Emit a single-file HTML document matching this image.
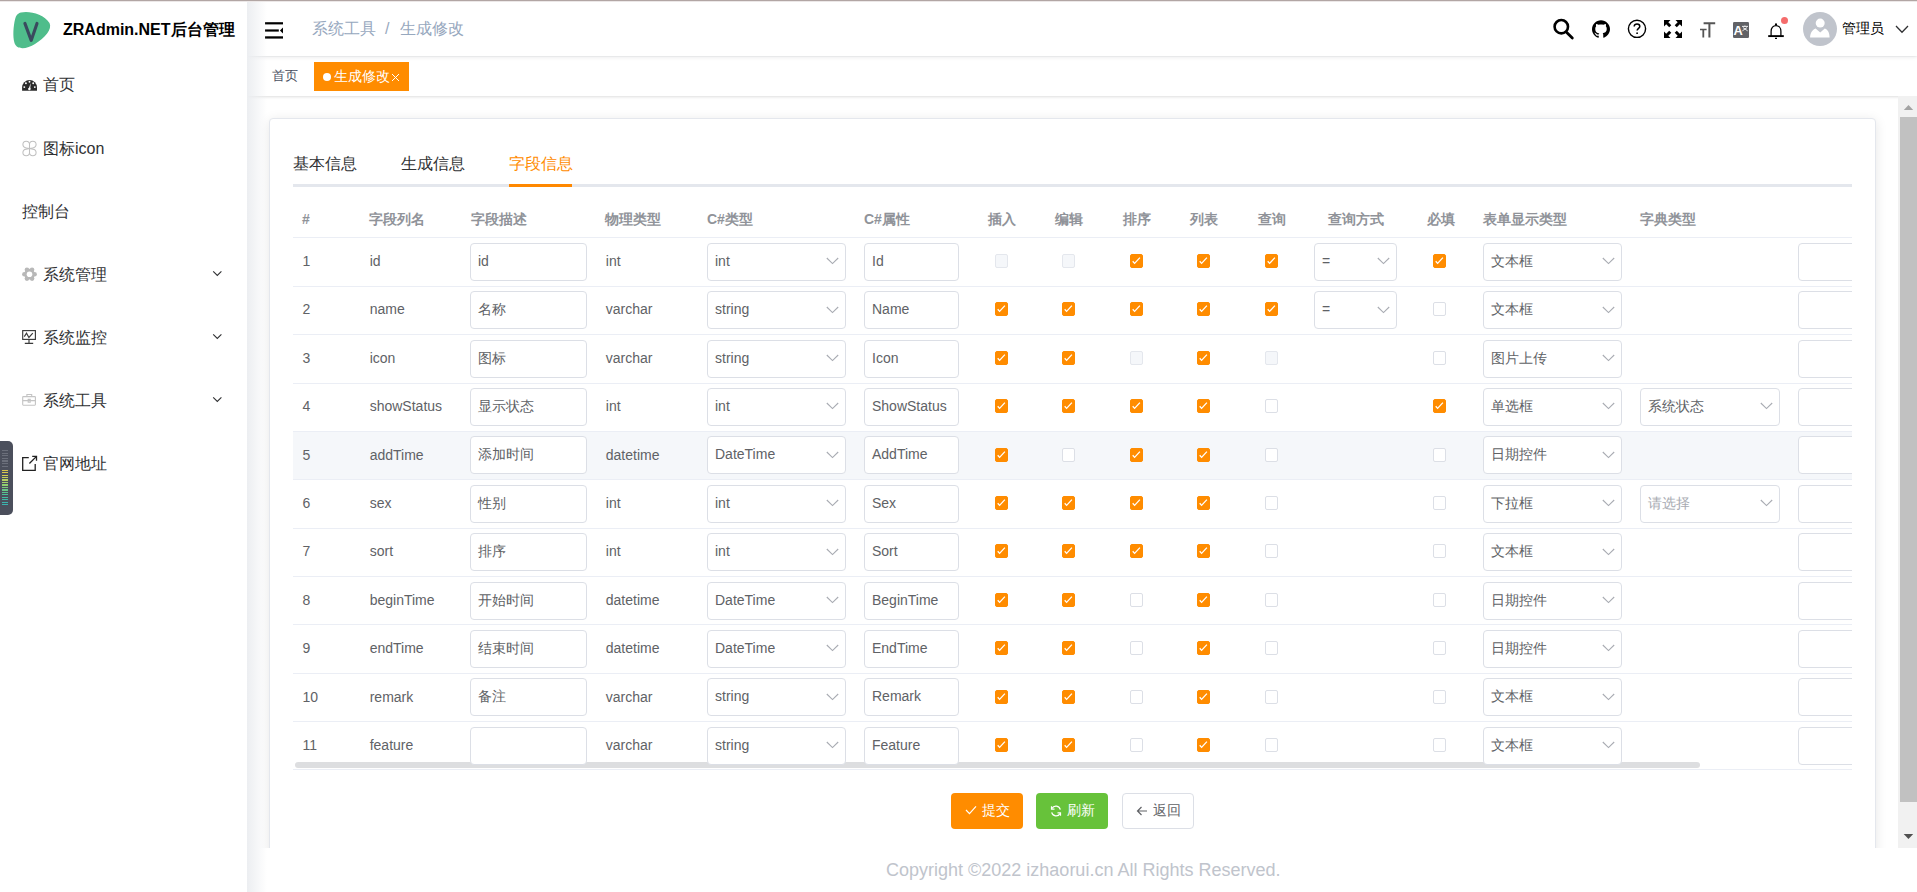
<!DOCTYPE html>
<html><head><meta charset="utf-8">
<style>
*{box-sizing:border-box;margin:0;padding:0}
html,body{width:1917px;height:892px;overflow:hidden;background:#fff;font-family:"Liberation Sans",sans-serif;color:#303133}
.abs{position:absolute}
#topline{position:absolute;left:0;top:0;width:1917px;height:2px;background:linear-gradient(#b2a6a4 0,#b2a6a4 50%,#ece8e8 50%,#ece8e8 100%);z-index:10}
/* sidebar */
#side{position:absolute;left:0;top:0;width:247px;height:892px;background:#fff;z-index:3}
#sideshadow{position:absolute;left:247px;top:1px;width:20px;height:891px;background:linear-gradient(to right,#eceef1,rgba(255,255,255,0));z-index:2}
.logo{position:absolute;left:14px;top:12px;width:37px;height:37px}
.title{position:absolute;left:63px;top:19.6px;font-size:16px;font-weight:bold;color:#000;white-space:nowrap;line-height:20px}
.mi{position:absolute;left:22px;font-size:16px;color:#303133;white-space:nowrap;line-height:20px}
.mi .t{position:absolute;left:21px;top:0}
.mi svg{position:absolute;left:0;top:3px}
.chev{position:absolute;left:212px;width:11px;height:7px}
#widget{position:absolute;left:0;top:441px;width:13px;height:74px;background:#4b4f5c;border-radius:0 5px 5px 0;z-index:4}
/* header */
#header{position:absolute;left:247px;top:1px;width:1670px;height:55px;background:#fff;box-shadow:0 1px 4px rgba(0,21,41,.1);z-index:1}
#tags{position:absolute;left:247px;top:57px;width:1670px;height:39px;background:#fff;box-shadow:0 1px 3px 0 rgba(0,0,0,.12),0 0 3px 0 rgba(0,0,0,.04)}
.bc{position:absolute;top:18px;font-size:16px;color:#97a8be;line-height:20px;white-space:nowrap}
.tag1{position:absolute;left:272px;top:66px;font-size:13px;color:#495060;line-height:20px}
.tag2{position:absolute;left:314px;top:62px;width:95px;height:29px;background:#ff8c00;color:#fff;font-size:13px;line-height:29px;white-space:nowrap}
/* main */
#card{position:absolute;left:269px;top:118px;width:1607px;height:800px;background:#fff;border:1px solid #e4e7ed;border-radius:4px;box-shadow:0 2px 12px 0 rgba(0,0,0,.1)}
#mainclip{position:absolute;left:247px;top:96px;width:1651px;height:752px;overflow:hidden}
.tab{position:absolute;top:154px;font-size:16px;color:#303133;line-height:20px;white-space:nowrap}
#tabline{position:absolute;left:293px;top:184px;width:1559px;height:3px;background:#e4e7ed}
#tabbar{position:absolute;left:509px;top:184px;width:63px;height:3px;background:#ff8800}
#tbl{position:absolute;left:293px;top:0;width:1559px;height:892px;overflow:hidden}
.th{position:absolute;top:210px;font-size:14px;font-weight:bold;color:#909399;line-height:18px;white-space:nowrap}
.hl{position:absolute;left:0;width:1559px;height:1px;background:#ebeef5}
.rowbg{position:absolute;left:0;width:1559px;background:#fff}
.rowbg.hov{background:#f5f7fa}
.td{position:absolute;font-size:14px;color:#606266;line-height:18px;white-space:nowrap}
.inp{position:absolute;height:38px;border:1px solid #dcdfe6;border-radius:4px;background:#fff;font-size:14px;color:#606266;line-height:35px;padding-left:7px;white-space:nowrap;overflow:hidden}
.inp .ph{color:#a8abb2}
.inp .arr{position:absolute;right:6px;top:13.4px}
.cb{position:absolute;width:13px;height:14px;border:1px solid #dcdfe6;border-radius:2px;background:#fff}
.cb.dis{background:#f5f7fa;border-color:#e4e7ed}
.cb.on{background:#ff8c00;border-color:#ff8c00}
.cb svg{position:absolute;left:-1px;top:-1px}
#hscroll{position:absolute;left:2px;top:762px;width:1405px;height:6px;background:#dddee0;border-radius:3px}
.btn{position:absolute;top:793px;height:36px;width:72px;border-radius:4px;font-size:14px;line-height:34px;color:#fff;white-space:nowrap}
/* scrollbar */
#vs{position:absolute;left:1898px;top:96px;width:19px;height:752px;background:#f1f1f1}
#vthumb{position:absolute;left:2px;top:21px;width:17px;height:685px;background:#c1c1c1}
#footer{position:absolute;left:886px;top:859px;font-size:18px;color:#c0c4cc;line-height:22px;white-space:nowrap}
.hi{position:absolute}
</style></head><body>
<div id="topline"></div>

<div id="header">
  <svg class="abs" style="left:18px;top:21px" width="20" height="18" viewBox="0 0 20 18"><rect x="0" y="0.2" width="18" height="2.2" fill="#000"/><rect x="0" y="7.4" width="13.8" height="2.2" fill="#000"/><rect x="0" y="14.3" width="18" height="2.3" fill="#000"/><path d="M18 5.6 L14.9 8.5 L18 11.4 Z" fill="#000"/></svg>
  <div class="bc" style="left:65px">系统工具</div>
  <div class="bc" style="left:138px">/</div>
  <div class="bc" style="left:153px">生成修改</div>
</div>
<div class="abs" style="left:0;top:0;z-index:2">
<svg class="abs" style="left:1550px;top:16px" width="26" height="26" viewBox="0 0 26 26"><circle cx="11.3" cy="10.7" r="6.7" stroke="#000" stroke-width="2.6" fill="none"/><path d="M16.5 16.3 L22.3 22" stroke="#000" stroke-width="2.8" stroke-linecap="round"/></svg>
<svg class="abs" style="left:1592px;top:20px" width="18" height="18" viewBox="0 0 16 16"><path fill="#000" d="M8 0.2C3.6 0.2 0 3.8 0 8.2c0 3.5 2.3 6.5 5.5 7.6.4.1.5-.2.5-.4v-1.4c-2.2.5-2.7-1-2.7-1-.4-.9-.9-1.2-.9-1.2-.7-.5.1-.5.1-.5.8.1 1.2.8 1.2.8.7 1.2 1.9.9 2.3.7.1-.5.3-.9.5-1.1-1.8-.2-3.6-.9-3.6-4 0-.9.3-1.6.8-2.1-.1-.2-.4-1 .1-2.1 0 0 .7-.2 2.2.8.6-.2 1.3-.3 2-.3s1.4.1 2 .3c1.5-1 2.2-.8 2.2-.8.4 1.1.2 1.9.1 2.1.5.6.8 1.3.8 2.1 0 3.1-1.9 3.7-3.6 3.9.3.3.5.8.5 1.5v2.2c0 .2.1.5.6.4 3.2-1.1 5.4-4.1 5.4-7.6C16 3.8 12.4.2 8 .2z"/></svg>
<svg class="abs" style="left:1626px;top:18px" width="22" height="22" viewBox="0 0 22 22"><circle cx="11" cy="10.8" r="8.6" stroke="#000" stroke-width="1.4" fill="none"/><path d="M8.2 8.6 C8.2 6.9 9.4 6 11 6 C12.6 6 13.8 7 13.8 8.4 C13.8 10.2 11.1 10.5 11.1 12.6" stroke="#000" stroke-width="1.5" fill="none"/><circle cx="11.1" cy="15.2" r="0.9" fill="#000"/></svg>
<svg class="abs" style="left:1663px;top:19px" width="20" height="20" viewBox="0 0 20 20" fill="#000"><path d="M1 1 H7.5 L5.3 3.2 L8.3 6.2 L6.2 8.3 L3.2 5.3 L1 7.5 Z"/><path d="M19 1 V7.5 L16.8 5.3 L13.8 8.3 L11.7 6.2 L14.7 3.2 L12.5 1 Z"/><path d="M1 19 V12.5 L3.2 14.7 L6.2 11.7 L8.3 13.8 L5.3 16.8 L7.5 19 Z"/><path d="M19 19 H12.5 L14.7 16.8 L11.7 13.8 L13.8 11.7 L16.8 14.7 L19 12.5 Z"/></svg>
<svg class="abs" style="left:1699px;top:21px" width="18" height="18" viewBox="0 0 18 18" fill="#555"><path d="M4.6 1.3 H16.2 V3.2 H11.4 V16.6 H9.4 V3.2 H4.6 Z"/><path d="M1 7.7 H7.6 V9.3 H5.2 V16.6 H3.4 V9.3 H1 Z"/></svg>
<svg class="abs" style="left:1732px;top:21px" width="18" height="18" viewBox="0 0 18 18"><rect x="1" y="1" width="16" height="16" rx="1.2" fill="#616266"/><text x="1.5" y="14.1" font-family="Liberation Sans" font-weight="bold" font-size="12.8" fill="#fff">A</text><path d="M10 5.4 H16 M12.9 4.5 V5.4 M11 6.6 L15.6 9.8 M15 6.6 L10.4 9.8" stroke="#fff" stroke-width="0.9" fill="none"/></svg>
<svg class="abs" style="left:1766px;top:21px" width="20" height="20" viewBox="0 0 20 20"><path d="M5.1 15 V10.2 C5.1 6.9 7.2 4.5 10 4.5 C12.8 4.5 14.9 6.9 14.9 10.2 V15" stroke="#000" stroke-width="1.25" fill="none"/><path d="M2.2 15.1 H17.8" stroke="#000" stroke-width="1.9"/><circle cx="10" cy="3.4" r="1.1" fill="#000"/><path d="M9 17.4 H11" stroke="#000" stroke-width="1.2"/></svg>
<div class="abs" style="left:1781px;top:16.5px;width:7px;height:7px;border-radius:50%;background:#f56c6c"></div>
<svg class="abs" style="left:1803px;top:12px" width="34" height="34" viewBox="0 0 34 34"><circle cx="17" cy="17" r="17" fill="#c0c4cc"/><circle cx="17.2" cy="11.1" r="4.5" fill="#fff"/><path d="M7.1 25.6 C7.1 21.4 9.4 17.6 12.6 16.6 L17.2 20.6 L21.8 16.6 C25 17.6 26.6 21.4 26.6 25.6 Z" fill="#fff"/></svg>
<div class="abs" style="left:1842px;top:19px;font-size:14px;line-height:18px;color:#000;white-space:nowrap">管理员</div>
<svg class="abs" style="left:1895px;top:25px" width="14" height="9" viewBox="0 0 14 9"><path d="M1 1 L7 7.2 L13 1" stroke="#303133" stroke-width="1.3" fill="none"/></svg>
</div>

<div id="tags"></div>
<div class="tag1">首页</div>
<div class="tag2"><span class="abs" style="left:9px;top:10.5px;width:8px;height:8px;border-radius:4px;background:#fff"></span><span class="abs" style="left:20px;top:0;font-size:13.5px">生成修改</span><svg class="abs" style="left:77px;top:11px" width="9" height="9" viewBox="0 0 9 9"><path d="M1 1 L8 8 M8 1 L1 8" stroke="#fff" stroke-width="1"/></svg></div>

<div id="mainclip">
  <div id="card" style="left:22px;top:22px"></div>
</div>

<div class="tab" style="left:293px">基本信息</div>
<div class="tab" style="left:401px">生成信息</div>
<div class="tab" style="left:509px;color:#ff8c00">字段信息</div>
<div id="tabline"></div>
<div id="tabbar"></div>

<div id="tbl">
<div class="th" style="left:9px">#</div>
<div class="th" style="left:76px">字段列名</div>
<div class="th" style="left:178px">字段描述</div>
<div class="th" style="left:312px">物理类型</div>
<div class="th" style="left:414px">C#类型</div>
<div class="th" style="left:571px">C#属性</div>
<div class="th" style="left:695px">插入</div>
<div class="th" style="left:762px">编辑</div>
<div class="th" style="left:830px">排序</div>
<div class="th" style="left:897px">列表</div>
<div class="th" style="left:965px">查询</div>
<div class="th" style="left:1035px">查询方式</div>
<div class="th" style="left:1134px">必填</div>
<div class="th" style="left:1190px">表单显示类型</div>
<div class="th" style="left:1347px">字典类型</div>
<div class="rowbg hov" style="top:431px;height:48px"></div>
<div id="hscroll"></div>
<div class="td" style="left:9.5px;top:252.0px">1</div>
<div class="td" style="left:76.69999999999999px;top:252.0px">id</div>
<div class="inp" style="left:177px;top:242.8px;width:117px"><span>id</span></div>
<div class="td" style="left:312.79999999999995px;top:252.0px">int</div>
<div class="inp sel" style="left:414px;top:242.8px;width:139px"><span class="">int</span><svg class="arr" width="13" height="8" viewBox="0 0 13 8"><path d="M0.8 1 L6.5 6.6 L12.2 1" stroke="#a8abb2" stroke-width="1.1" fill="none"/></svg></div>
<div class="inp" style="left:571px;top:242.8px;width:95px"><span>Id</span></div>
<div class="cb dis" style="left:702px;top:254.0px"></div>
<div class="cb dis" style="left:769px;top:254.0px"></div>
<div class="cb on" style="left:837px;top:254.0px"><svg width="13" height="14" viewBox="0 0 13 14"><path d="M2.7 7.3 L4.6 9.4 L9.9 3.6" stroke="#fff" stroke-width="1.3" fill="none"/></svg></div>
<div class="cb on" style="left:904px;top:254.0px"><svg width="13" height="14" viewBox="0 0 13 14"><path d="M2.7 7.3 L4.6 9.4 L9.9 3.6" stroke="#fff" stroke-width="1.3" fill="none"/></svg></div>
<div class="cb on" style="left:972px;top:254.0px"><svg width="13" height="14" viewBox="0 0 13 14"><path d="M2.7 7.3 L4.6 9.4 L9.9 3.6" stroke="#fff" stroke-width="1.3" fill="none"/></svg></div>
<div class="inp sel" style="left:1021px;top:242.8px;width:83px"><span class="">=</span><svg class="arr" width="13" height="8" viewBox="0 0 13 8"><path d="M0.8 1 L6.5 6.6 L12.2 1" stroke="#a8abb2" stroke-width="1.1" fill="none"/></svg></div>
<div class="cb on" style="left:1140px;top:254.0px"><svg width="13" height="14" viewBox="0 0 13 14"><path d="M2.7 7.3 L4.6 9.4 L9.9 3.6" stroke="#fff" stroke-width="1.3" fill="none"/></svg></div>
<div class="inp sel" style="left:1190px;top:242.8px;width:139px"><span class="">文本框</span><svg class="arr" width="13" height="8" viewBox="0 0 13 8"><path d="M0.8 1 L6.5 6.6 L12.2 1" stroke="#a8abb2" stroke-width="1.1" fill="none"/></svg></div>
<div class="inp" style="left:1505px;top:242.8px;width:120px"><span></span></div>
<div class="td" style="left:9.5px;top:300.4px">2</div>
<div class="td" style="left:76.69999999999999px;top:300.4px">name</div>
<div class="inp" style="left:177px;top:291.2px;width:117px"><span>名称</span></div>
<div class="td" style="left:312.79999999999995px;top:300.4px">varchar</div>
<div class="inp sel" style="left:414px;top:291.2px;width:139px"><span class="">string</span><svg class="arr" width="13" height="8" viewBox="0 0 13 8"><path d="M0.8 1 L6.5 6.6 L12.2 1" stroke="#a8abb2" stroke-width="1.1" fill="none"/></svg></div>
<div class="inp" style="left:571px;top:291.2px;width:95px"><span>Name</span></div>
<div class="cb on" style="left:702px;top:302.4px"><svg width="13" height="14" viewBox="0 0 13 14"><path d="M2.7 7.3 L4.6 9.4 L9.9 3.6" stroke="#fff" stroke-width="1.3" fill="none"/></svg></div>
<div class="cb on" style="left:769px;top:302.4px"><svg width="13" height="14" viewBox="0 0 13 14"><path d="M2.7 7.3 L4.6 9.4 L9.9 3.6" stroke="#fff" stroke-width="1.3" fill="none"/></svg></div>
<div class="cb on" style="left:837px;top:302.4px"><svg width="13" height="14" viewBox="0 0 13 14"><path d="M2.7 7.3 L4.6 9.4 L9.9 3.6" stroke="#fff" stroke-width="1.3" fill="none"/></svg></div>
<div class="cb on" style="left:904px;top:302.4px"><svg width="13" height="14" viewBox="0 0 13 14"><path d="M2.7 7.3 L4.6 9.4 L9.9 3.6" stroke="#fff" stroke-width="1.3" fill="none"/></svg></div>
<div class="cb on" style="left:972px;top:302.4px"><svg width="13" height="14" viewBox="0 0 13 14"><path d="M2.7 7.3 L4.6 9.4 L9.9 3.6" stroke="#fff" stroke-width="1.3" fill="none"/></svg></div>
<div class="inp sel" style="left:1021px;top:291.2px;width:83px"><span class="">=</span><svg class="arr" width="13" height="8" viewBox="0 0 13 8"><path d="M0.8 1 L6.5 6.6 L12.2 1" stroke="#a8abb2" stroke-width="1.1" fill="none"/></svg></div>
<div class="cb" style="left:1140px;top:302.4px"></div>
<div class="inp sel" style="left:1190px;top:291.2px;width:139px"><span class="">文本框</span><svg class="arr" width="13" height="8" viewBox="0 0 13 8"><path d="M0.8 1 L6.5 6.6 L12.2 1" stroke="#a8abb2" stroke-width="1.1" fill="none"/></svg></div>
<div class="inp" style="left:1505px;top:291.2px;width:120px"><span></span></div>
<div class="td" style="left:9.5px;top:348.8px">3</div>
<div class="td" style="left:76.69999999999999px;top:348.8px">icon</div>
<div class="inp" style="left:177px;top:339.6px;width:117px"><span>图标</span></div>
<div class="td" style="left:312.79999999999995px;top:348.8px">varchar</div>
<div class="inp sel" style="left:414px;top:339.6px;width:139px"><span class="">string</span><svg class="arr" width="13" height="8" viewBox="0 0 13 8"><path d="M0.8 1 L6.5 6.6 L12.2 1" stroke="#a8abb2" stroke-width="1.1" fill="none"/></svg></div>
<div class="inp" style="left:571px;top:339.6px;width:95px"><span>Icon</span></div>
<div class="cb on" style="left:702px;top:350.8px"><svg width="13" height="14" viewBox="0 0 13 14"><path d="M2.7 7.3 L4.6 9.4 L9.9 3.6" stroke="#fff" stroke-width="1.3" fill="none"/></svg></div>
<div class="cb on" style="left:769px;top:350.8px"><svg width="13" height="14" viewBox="0 0 13 14"><path d="M2.7 7.3 L4.6 9.4 L9.9 3.6" stroke="#fff" stroke-width="1.3" fill="none"/></svg></div>
<div class="cb dis" style="left:837px;top:350.8px"></div>
<div class="cb on" style="left:904px;top:350.8px"><svg width="13" height="14" viewBox="0 0 13 14"><path d="M2.7 7.3 L4.6 9.4 L9.9 3.6" stroke="#fff" stroke-width="1.3" fill="none"/></svg></div>
<div class="cb dis" style="left:972px;top:350.8px"></div>
<div class="cb" style="left:1140px;top:350.8px"></div>
<div class="inp sel" style="left:1190px;top:339.6px;width:139px"><span class="">图片上传</span><svg class="arr" width="13" height="8" viewBox="0 0 13 8"><path d="M0.8 1 L6.5 6.6 L12.2 1" stroke="#a8abb2" stroke-width="1.1" fill="none"/></svg></div>
<div class="inp" style="left:1505px;top:339.6px;width:120px"><span></span></div>
<div class="td" style="left:9.5px;top:397.2px">4</div>
<div class="td" style="left:76.69999999999999px;top:397.2px">showStatus</div>
<div class="inp" style="left:177px;top:388.0px;width:117px"><span>显示状态</span></div>
<div class="td" style="left:312.79999999999995px;top:397.2px">int</div>
<div class="inp sel" style="left:414px;top:388.0px;width:139px"><span class="">int</span><svg class="arr" width="13" height="8" viewBox="0 0 13 8"><path d="M0.8 1 L6.5 6.6 L12.2 1" stroke="#a8abb2" stroke-width="1.1" fill="none"/></svg></div>
<div class="inp" style="left:571px;top:388.0px;width:95px"><span>ShowStatus</span></div>
<div class="cb on" style="left:702px;top:399.2px"><svg width="13" height="14" viewBox="0 0 13 14"><path d="M2.7 7.3 L4.6 9.4 L9.9 3.6" stroke="#fff" stroke-width="1.3" fill="none"/></svg></div>
<div class="cb on" style="left:769px;top:399.2px"><svg width="13" height="14" viewBox="0 0 13 14"><path d="M2.7 7.3 L4.6 9.4 L9.9 3.6" stroke="#fff" stroke-width="1.3" fill="none"/></svg></div>
<div class="cb on" style="left:837px;top:399.2px"><svg width="13" height="14" viewBox="0 0 13 14"><path d="M2.7 7.3 L4.6 9.4 L9.9 3.6" stroke="#fff" stroke-width="1.3" fill="none"/></svg></div>
<div class="cb on" style="left:904px;top:399.2px"><svg width="13" height="14" viewBox="0 0 13 14"><path d="M2.7 7.3 L4.6 9.4 L9.9 3.6" stroke="#fff" stroke-width="1.3" fill="none"/></svg></div>
<div class="cb" style="left:972px;top:399.2px"></div>
<div class="cb on" style="left:1140px;top:399.2px"><svg width="13" height="14" viewBox="0 0 13 14"><path d="M2.7 7.3 L4.6 9.4 L9.9 3.6" stroke="#fff" stroke-width="1.3" fill="none"/></svg></div>
<div class="inp sel" style="left:1190px;top:388.0px;width:139px"><span class="">单选框</span><svg class="arr" width="13" height="8" viewBox="0 0 13 8"><path d="M0.8 1 L6.5 6.6 L12.2 1" stroke="#a8abb2" stroke-width="1.1" fill="none"/></svg></div>
<div class="inp sel" style="left:1347px;top:388.0px;width:140px"><span class="">系统状态</span><svg class="arr" width="13" height="8" viewBox="0 0 13 8"><path d="M0.8 1 L6.5 6.6 L12.2 1" stroke="#a8abb2" stroke-width="1.1" fill="none"/></svg></div>
<div class="inp" style="left:1505px;top:388.0px;width:120px"><span></span></div>
<div class="td" style="left:9.5px;top:445.6px">5</div>
<div class="td" style="left:76.69999999999999px;top:445.6px">addTime</div>
<div class="inp" style="left:177px;top:436.4px;width:117px"><span>添加时间</span></div>
<div class="td" style="left:312.79999999999995px;top:445.6px">datetime</div>
<div class="inp sel" style="left:414px;top:436.4px;width:139px"><span class="">DateTime</span><svg class="arr" width="13" height="8" viewBox="0 0 13 8"><path d="M0.8 1 L6.5 6.6 L12.2 1" stroke="#a8abb2" stroke-width="1.1" fill="none"/></svg></div>
<div class="inp" style="left:571px;top:436.4px;width:95px"><span>AddTime</span></div>
<div class="cb on" style="left:702px;top:447.6px"><svg width="13" height="14" viewBox="0 0 13 14"><path d="M2.7 7.3 L4.6 9.4 L9.9 3.6" stroke="#fff" stroke-width="1.3" fill="none"/></svg></div>
<div class="cb" style="left:769px;top:447.6px"></div>
<div class="cb on" style="left:837px;top:447.6px"><svg width="13" height="14" viewBox="0 0 13 14"><path d="M2.7 7.3 L4.6 9.4 L9.9 3.6" stroke="#fff" stroke-width="1.3" fill="none"/></svg></div>
<div class="cb on" style="left:904px;top:447.6px"><svg width="13" height="14" viewBox="0 0 13 14"><path d="M2.7 7.3 L4.6 9.4 L9.9 3.6" stroke="#fff" stroke-width="1.3" fill="none"/></svg></div>
<div class="cb" style="left:972px;top:447.6px"></div>
<div class="cb" style="left:1140px;top:447.6px"></div>
<div class="inp sel" style="left:1190px;top:436.4px;width:139px"><span class="">日期控件</span><svg class="arr" width="13" height="8" viewBox="0 0 13 8"><path d="M0.8 1 L6.5 6.6 L12.2 1" stroke="#a8abb2" stroke-width="1.1" fill="none"/></svg></div>
<div class="inp" style="left:1505px;top:436.4px;width:120px"><span></span></div>
<div class="td" style="left:9.5px;top:494.0px">6</div>
<div class="td" style="left:76.69999999999999px;top:494.0px">sex</div>
<div class="inp" style="left:177px;top:484.8px;width:117px"><span>性别</span></div>
<div class="td" style="left:312.79999999999995px;top:494.0px">int</div>
<div class="inp sel" style="left:414px;top:484.8px;width:139px"><span class="">int</span><svg class="arr" width="13" height="8" viewBox="0 0 13 8"><path d="M0.8 1 L6.5 6.6 L12.2 1" stroke="#a8abb2" stroke-width="1.1" fill="none"/></svg></div>
<div class="inp" style="left:571px;top:484.8px;width:95px"><span>Sex</span></div>
<div class="cb on" style="left:702px;top:496.0px"><svg width="13" height="14" viewBox="0 0 13 14"><path d="M2.7 7.3 L4.6 9.4 L9.9 3.6" stroke="#fff" stroke-width="1.3" fill="none"/></svg></div>
<div class="cb on" style="left:769px;top:496.0px"><svg width="13" height="14" viewBox="0 0 13 14"><path d="M2.7 7.3 L4.6 9.4 L9.9 3.6" stroke="#fff" stroke-width="1.3" fill="none"/></svg></div>
<div class="cb on" style="left:837px;top:496.0px"><svg width="13" height="14" viewBox="0 0 13 14"><path d="M2.7 7.3 L4.6 9.4 L9.9 3.6" stroke="#fff" stroke-width="1.3" fill="none"/></svg></div>
<div class="cb on" style="left:904px;top:496.0px"><svg width="13" height="14" viewBox="0 0 13 14"><path d="M2.7 7.3 L4.6 9.4 L9.9 3.6" stroke="#fff" stroke-width="1.3" fill="none"/></svg></div>
<div class="cb" style="left:972px;top:496.0px"></div>
<div class="cb" style="left:1140px;top:496.0px"></div>
<div class="inp sel" style="left:1190px;top:484.8px;width:139px"><span class="">下拉框</span><svg class="arr" width="13" height="8" viewBox="0 0 13 8"><path d="M0.8 1 L6.5 6.6 L12.2 1" stroke="#a8abb2" stroke-width="1.1" fill="none"/></svg></div>
<div class="inp sel" style="left:1347px;top:484.8px;width:140px"><span class="ph">请选择</span><svg class="arr" width="13" height="8" viewBox="0 0 13 8"><path d="M0.8 1 L6.5 6.6 L12.2 1" stroke="#a8abb2" stroke-width="1.1" fill="none"/></svg></div>
<div class="inp" style="left:1505px;top:484.8px;width:120px"><span></span></div>
<div class="td" style="left:9.5px;top:542.4px">7</div>
<div class="td" style="left:76.69999999999999px;top:542.4px">sort</div>
<div class="inp" style="left:177px;top:533.2px;width:117px"><span>排序</span></div>
<div class="td" style="left:312.79999999999995px;top:542.4px">int</div>
<div class="inp sel" style="left:414px;top:533.2px;width:139px"><span class="">int</span><svg class="arr" width="13" height="8" viewBox="0 0 13 8"><path d="M0.8 1 L6.5 6.6 L12.2 1" stroke="#a8abb2" stroke-width="1.1" fill="none"/></svg></div>
<div class="inp" style="left:571px;top:533.2px;width:95px"><span>Sort</span></div>
<div class="cb on" style="left:702px;top:544.4px"><svg width="13" height="14" viewBox="0 0 13 14"><path d="M2.7 7.3 L4.6 9.4 L9.9 3.6" stroke="#fff" stroke-width="1.3" fill="none"/></svg></div>
<div class="cb on" style="left:769px;top:544.4px"><svg width="13" height="14" viewBox="0 0 13 14"><path d="M2.7 7.3 L4.6 9.4 L9.9 3.6" stroke="#fff" stroke-width="1.3" fill="none"/></svg></div>
<div class="cb on" style="left:837px;top:544.4px"><svg width="13" height="14" viewBox="0 0 13 14"><path d="M2.7 7.3 L4.6 9.4 L9.9 3.6" stroke="#fff" stroke-width="1.3" fill="none"/></svg></div>
<div class="cb on" style="left:904px;top:544.4px"><svg width="13" height="14" viewBox="0 0 13 14"><path d="M2.7 7.3 L4.6 9.4 L9.9 3.6" stroke="#fff" stroke-width="1.3" fill="none"/></svg></div>
<div class="cb" style="left:972px;top:544.4px"></div>
<div class="cb" style="left:1140px;top:544.4px"></div>
<div class="inp sel" style="left:1190px;top:533.2px;width:139px"><span class="">文本框</span><svg class="arr" width="13" height="8" viewBox="0 0 13 8"><path d="M0.8 1 L6.5 6.6 L12.2 1" stroke="#a8abb2" stroke-width="1.1" fill="none"/></svg></div>
<div class="inp" style="left:1505px;top:533.2px;width:120px"><span></span></div>
<div class="td" style="left:9.5px;top:590.8px">8</div>
<div class="td" style="left:76.69999999999999px;top:590.8px">beginTime</div>
<div class="inp" style="left:177px;top:581.6px;width:117px"><span>开始时间</span></div>
<div class="td" style="left:312.79999999999995px;top:590.8px">datetime</div>
<div class="inp sel" style="left:414px;top:581.6px;width:139px"><span class="">DateTime</span><svg class="arr" width="13" height="8" viewBox="0 0 13 8"><path d="M0.8 1 L6.5 6.6 L12.2 1" stroke="#a8abb2" stroke-width="1.1" fill="none"/></svg></div>
<div class="inp" style="left:571px;top:581.6px;width:95px"><span>BeginTime</span></div>
<div class="cb on" style="left:702px;top:592.8px"><svg width="13" height="14" viewBox="0 0 13 14"><path d="M2.7 7.3 L4.6 9.4 L9.9 3.6" stroke="#fff" stroke-width="1.3" fill="none"/></svg></div>
<div class="cb on" style="left:769px;top:592.8px"><svg width="13" height="14" viewBox="0 0 13 14"><path d="M2.7 7.3 L4.6 9.4 L9.9 3.6" stroke="#fff" stroke-width="1.3" fill="none"/></svg></div>
<div class="cb" style="left:837px;top:592.8px"></div>
<div class="cb on" style="left:904px;top:592.8px"><svg width="13" height="14" viewBox="0 0 13 14"><path d="M2.7 7.3 L4.6 9.4 L9.9 3.6" stroke="#fff" stroke-width="1.3" fill="none"/></svg></div>
<div class="cb" style="left:972px;top:592.8px"></div>
<div class="cb" style="left:1140px;top:592.8px"></div>
<div class="inp sel" style="left:1190px;top:581.6px;width:139px"><span class="">日期控件</span><svg class="arr" width="13" height="8" viewBox="0 0 13 8"><path d="M0.8 1 L6.5 6.6 L12.2 1" stroke="#a8abb2" stroke-width="1.1" fill="none"/></svg></div>
<div class="inp" style="left:1505px;top:581.6px;width:120px"><span></span></div>
<div class="td" style="left:9.5px;top:639.2px">9</div>
<div class="td" style="left:76.69999999999999px;top:639.2px">endTime</div>
<div class="inp" style="left:177px;top:630.0px;width:117px"><span>结束时间</span></div>
<div class="td" style="left:312.79999999999995px;top:639.2px">datetime</div>
<div class="inp sel" style="left:414px;top:630.0px;width:139px"><span class="">DateTime</span><svg class="arr" width="13" height="8" viewBox="0 0 13 8"><path d="M0.8 1 L6.5 6.6 L12.2 1" stroke="#a8abb2" stroke-width="1.1" fill="none"/></svg></div>
<div class="inp" style="left:571px;top:630.0px;width:95px"><span>EndTime</span></div>
<div class="cb on" style="left:702px;top:641.2px"><svg width="13" height="14" viewBox="0 0 13 14"><path d="M2.7 7.3 L4.6 9.4 L9.9 3.6" stroke="#fff" stroke-width="1.3" fill="none"/></svg></div>
<div class="cb on" style="left:769px;top:641.2px"><svg width="13" height="14" viewBox="0 0 13 14"><path d="M2.7 7.3 L4.6 9.4 L9.9 3.6" stroke="#fff" stroke-width="1.3" fill="none"/></svg></div>
<div class="cb" style="left:837px;top:641.2px"></div>
<div class="cb on" style="left:904px;top:641.2px"><svg width="13" height="14" viewBox="0 0 13 14"><path d="M2.7 7.3 L4.6 9.4 L9.9 3.6" stroke="#fff" stroke-width="1.3" fill="none"/></svg></div>
<div class="cb" style="left:972px;top:641.2px"></div>
<div class="cb" style="left:1140px;top:641.2px"></div>
<div class="inp sel" style="left:1190px;top:630.0px;width:139px"><span class="">日期控件</span><svg class="arr" width="13" height="8" viewBox="0 0 13 8"><path d="M0.8 1 L6.5 6.6 L12.2 1" stroke="#a8abb2" stroke-width="1.1" fill="none"/></svg></div>
<div class="inp" style="left:1505px;top:630.0px;width:120px"><span></span></div>
<div class="td" style="left:9.5px;top:687.6px">10</div>
<div class="td" style="left:76.69999999999999px;top:687.6px">remark</div>
<div class="inp" style="left:177px;top:678.4px;width:117px"><span>备注</span></div>
<div class="td" style="left:312.79999999999995px;top:687.6px">varchar</div>
<div class="inp sel" style="left:414px;top:678.4px;width:139px"><span class="">string</span><svg class="arr" width="13" height="8" viewBox="0 0 13 8"><path d="M0.8 1 L6.5 6.6 L12.2 1" stroke="#a8abb2" stroke-width="1.1" fill="none"/></svg></div>
<div class="inp" style="left:571px;top:678.4px;width:95px"><span>Remark</span></div>
<div class="cb on" style="left:702px;top:689.6px"><svg width="13" height="14" viewBox="0 0 13 14"><path d="M2.7 7.3 L4.6 9.4 L9.9 3.6" stroke="#fff" stroke-width="1.3" fill="none"/></svg></div>
<div class="cb on" style="left:769px;top:689.6px"><svg width="13" height="14" viewBox="0 0 13 14"><path d="M2.7 7.3 L4.6 9.4 L9.9 3.6" stroke="#fff" stroke-width="1.3" fill="none"/></svg></div>
<div class="cb" style="left:837px;top:689.6px"></div>
<div class="cb on" style="left:904px;top:689.6px"><svg width="13" height="14" viewBox="0 0 13 14"><path d="M2.7 7.3 L4.6 9.4 L9.9 3.6" stroke="#fff" stroke-width="1.3" fill="none"/></svg></div>
<div class="cb" style="left:972px;top:689.6px"></div>
<div class="cb" style="left:1140px;top:689.6px"></div>
<div class="inp sel" style="left:1190px;top:678.4px;width:139px"><span class="">文本框</span><svg class="arr" width="13" height="8" viewBox="0 0 13 8"><path d="M0.8 1 L6.5 6.6 L12.2 1" stroke="#a8abb2" stroke-width="1.1" fill="none"/></svg></div>
<div class="inp" style="left:1505px;top:678.4px;width:120px"><span></span></div>
<div class="td" style="left:9.5px;top:736.0px">11</div>
<div class="td" style="left:76.69999999999999px;top:736.0px">feature</div>
<div class="inp" style="left:177px;top:726.8px;width:117px"><span></span></div>
<div class="td" style="left:312.79999999999995px;top:736.0px">varchar</div>
<div class="inp sel" style="left:414px;top:726.8px;width:139px"><span class="">string</span><svg class="arr" width="13" height="8" viewBox="0 0 13 8"><path d="M0.8 1 L6.5 6.6 L12.2 1" stroke="#a8abb2" stroke-width="1.1" fill="none"/></svg></div>
<div class="inp" style="left:571px;top:726.8px;width:95px"><span>Feature</span></div>
<div class="cb on" style="left:702px;top:738.0px"><svg width="13" height="14" viewBox="0 0 13 14"><path d="M2.7 7.3 L4.6 9.4 L9.9 3.6" stroke="#fff" stroke-width="1.3" fill="none"/></svg></div>
<div class="cb on" style="left:769px;top:738.0px"><svg width="13" height="14" viewBox="0 0 13 14"><path d="M2.7 7.3 L4.6 9.4 L9.9 3.6" stroke="#fff" stroke-width="1.3" fill="none"/></svg></div>
<div class="cb" style="left:837px;top:738.0px"></div>
<div class="cb on" style="left:904px;top:738.0px"><svg width="13" height="14" viewBox="0 0 13 14"><path d="M2.7 7.3 L4.6 9.4 L9.9 3.6" stroke="#fff" stroke-width="1.3" fill="none"/></svg></div>
<div class="cb" style="left:972px;top:738.0px"></div>
<div class="cb" style="left:1140px;top:738.0px"></div>
<div class="inp sel" style="left:1190px;top:726.8px;width:139px"><span class="">文本框</span><svg class="arr" width="13" height="8" viewBox="0 0 13 8"><path d="M0.8 1 L6.5 6.6 L12.2 1" stroke="#a8abb2" stroke-width="1.1" fill="none"/></svg></div>
<div class="inp" style="left:1505px;top:726.8px;width:120px"><span></span></div>
<div class="hl" style="top:237px"></div>
<div class="hl" style="top:286px"></div>
<div class="hl" style="top:334px"></div>
<div class="hl" style="top:383px"></div>
<div class="hl" style="top:431px"></div>
<div class="hl" style="top:479px"></div>
<div class="hl" style="top:528px"></div>
<div class="hl" style="top:576px"></div>
<div class="hl" style="top:624px"></div>
<div class="hl" style="top:673px"></div>
<div class="hl" style="top:721px"></div>
<div class="hl" style="top:769px"></div>
</div>

<div class="btn" style="left:951px;background:#ff8c00"><svg class="abs" style="left:14px;top:12px" width="12" height="10" viewBox="0 0 12 10"><path d="M1 5 L4.5 8.6 L11 1.4" stroke="#fff" stroke-width="1.2" fill="none"/></svg><span class="abs" style="left:31px;top:0">提交</span></div>
<div class="btn" style="left:1036px;background:#67c23a"><svg class="abs" style="left:14px;top:12px" width="12" height="12" viewBox="0 0 12 12"><path d="M10.3 4.6 A4.5 4.5 0 0 0 2 3.4 M1.7 7.4 A4.5 4.5 0 0 0 10 8.6" stroke="#fff" stroke-width="1.2" fill="none"/><path d="M1.5 1.2 V4.2 H4.5" stroke="#fff" stroke-width="1.2" fill="none"/><path d="M10.5 10.8 V7.8 H7.5" stroke="#fff" stroke-width="1.2" fill="none"/></svg><span class="abs" style="left:31px;top:0">刷新</span></div>
<div class="btn" style="left:1122px;background:#fff;border:1px solid #dcdfe6;color:#606266"><svg class="abs" style="left:13px;top:11px" width="12" height="12" viewBox="0 0 12 12"><path d="M11 6 H1.5 M5.5 2 L1.5 6 L5.5 10" stroke="#606266" stroke-width="1.2" fill="none"/></svg><span class="abs" style="left:30px;top:-1px">返回</span></div>

<div id="vs"><div id="vthumb"></div><svg class="abs" style="left:0;top:0" width="19" height="752" viewBox="0 0 19 752"><path d="M5.8 14 L15.2 14 L10.5 9 Z" fill="#a3a3a3"/><path d="M5.7 738 L15.2 738 L10.45 743 Z" fill="#505050"/></svg></div>

<div id="footer">Copyright ©2022 izhaorui.cn All Rights Reserved.</div>

<div id="sideshadow"></div>
<div id="side">
  <svg class="abs" style="left:0;top:0" width="247" height="892" viewBox="0 0 247 892">
    <path d="M21 12.5 C29 10.5 44 14 49.5 23 C52.5 29 45 38 35 44 C27 49 17 50.5 14.5 43 C12.5 36 13.5 26 15 19.5 C16 15 18 13.3 21 12.5 Z" fill="#4fbd8b"/>
    <path d="M24.9 23.4 L31.2 40.4 L37 23.4" stroke="#3a4a5e" stroke-width="3.1" fill="none" stroke-linejoin="round" stroke-linecap="round"/>
    <!-- dashboard -->
    <path d="M22.1 90.8 V87.4 A7.45 7.45 0 0 1 37 87.4 V90.8 Z" fill="#2b2b2b"/>
    <g fill="#fff"><circle cx="24.3" cy="87.1" r="0.95"/><circle cx="25.9" cy="83.3" r="0.95"/><circle cx="29.5" cy="81.7" r="0.95"/><circle cx="33.2" cy="83.3" r="0.95"/><circle cx="34.8" cy="87.1" r="0.95"/><circle cx="29.4" cy="88.9" r="1.25"/><path d="M28.7 88.7 L30.7 83 L30.2 88.9 Z"/></g>
    <!-- flower -->
    <g fill="none" stroke="#c0c0c0" stroke-width="1.05">
      <path d="M29.5 148.5 V144.6 A3.3 3.3 0 1 0 26.2 147.9 Z"/>
      <path d="M29.5 148.5 V144.6 A3.3 3.3 0 1 1 32.8 147.9 Z"/>
      <path d="M29.5 148.5 V152.4 A3.3 3.3 0 1 1 26.2 149.1 Z"/>
      <path d="M29.5 148.5 V152.4 A3.3 3.3 0 1 0 32.8 149.1 Z"/>
    </g>
    <!-- gear -->
    <g fill="#b8b8b8"><circle cx="29.5" cy="274.2" r="5.4"/><circle cx="34.60" cy="274.20" r="2.3"/><circle cx="32.05" cy="278.62" r="2.3"/><circle cx="26.95" cy="278.62" r="2.3"/><circle cx="24.40" cy="274.20" r="2.3"/><circle cx="26.95" cy="269.78" r="2.3"/><circle cx="32.05" cy="269.78" r="2.3"/></g>
    <circle cx="29.5" cy="274.2" r="2.8" fill="#fff"/>
    <!-- monitor -->
    <g fill="none" stroke="#3a3a3a" stroke-width="1.15">
      <rect x="22.7" y="330.6" width="12.7" height="8.8"/>
      <path d="M29 339.4 V343.2 M24.8 343.3 H33.2"/>
      <path d="M24.3 336.6 L26.5 333.2 L28.9 337.5 L32.8 333.1"/>
    </g>
    <!-- briefcase -->
    <g fill="none" stroke="#c4c4c4" stroke-width="1.1">
      <rect x="22.7" y="396.6" width="12.7" height="8.6" rx="0.6"/>
      <path d="M26.9 396.6 V394.5 H31.7 V396.6 M22.7 400.6 H35.4"/>
      <rect x="28.2" y="399.3" width="2" height="2.9"/>
    </g>
    <!-- external -->
    <g fill="none" stroke="#222" stroke-width="1.3">
      <path d="M28.8 457.6 H22.7 V470.3 H35.2 V464.1"/>
      <path d="M29.4 463.5 L36 456.9 M32.2 456.3 H36.5 V460.8"/>
    </g>
    <g fill="none" stroke="#303133" stroke-width="1.1">
      <path d="M213.2 271.3 L217.3 275.4 L221.4 271.3"/>
      <path d="M213.2 334.3 L217.3 338.4 L221.4 334.3"/>
      <path d="M213.2 397.3 L217.3 401.4 L221.4 397.3"/>
    </g>
  </svg>
  <div class="title">ZRAdmin.NET后台管理</div>
  <div class="mi" style="top:75px;left:43px">首页</div>
  <div class="mi" style="top:139px;left:43px">图标icon</div>
  <div class="mi" style="top:202px;left:22px">控制台</div>
  <div class="mi" style="top:265px;left:43px">系统管理</div>
  <div class="mi" style="top:328px;left:43px">系统监控</div>
  <div class="mi" style="top:391px;left:43px">系统工具</div>
  <div class="mi" style="top:454px;left:43px">官网地址</div>
</div>
<div id="widget"><div class="abs" style="left:2px;top:9.0px;width:6px;height:1.3px;background:#6b6f7b"></div><div class="abs" style="left:2px;top:11.6px;width:6px;height:1.3px;background:#6b6f7b"></div><div class="abs" style="left:2px;top:14.2px;width:6px;height:1.3px;background:#6b6f7b"></div><div class="abs" style="left:2px;top:16.8px;width:6px;height:1.3px;background:#6b6f7b"></div><div class="abs" style="left:2px;top:19.4px;width:6px;height:1.3px;background:#6b6f7b"></div><div class="abs" style="left:2px;top:22.0px;width:6px;height:1.3px;background:#6b6f7b"></div><div class="abs" style="left:2px;top:24.6px;width:6px;height:1.3px;background:#6b6f7b"></div><div class="abs" style="left:2px;top:28.6px;width:6px;height:1.4px;background:#d8c44a"></div><div class="abs" style="left:2px;top:31.1px;width:6px;height:1.4px;background:#d6c84e"></div><div class="abs" style="left:2px;top:33.5px;width:6px;height:1.4px;background:#cfcc52"></div><div class="abs" style="left:2px;top:36.0px;width:6px;height:1.4px;background:#c4cf58"></div><div class="abs" style="left:2px;top:38.4px;width:6px;height:1.4px;background:#b5d160"></div><div class="abs" style="left:2px;top:40.9px;width:6px;height:1.4px;background:#a4d268"></div><div class="abs" style="left:2px;top:43.3px;width:6px;height:1.4px;background:#90d070"></div><div class="abs" style="left:2px;top:45.8px;width:6px;height:1.4px;background:#7ccc7a"></div><div class="abs" style="left:2px;top:48.2px;width:6px;height:1.4px;background:#68c884"></div><div class="abs" style="left:2px;top:50.7px;width:6px;height:1.4px;background:#58c48e"></div><div class="abs" style="left:2px;top:53.1px;width:6px;height:1.4px;background:#4cc098"></div><div class="abs" style="left:2px;top:55.6px;width:6px;height:1.4px;background:#44bca0"></div><div class="abs" style="left:2px;top:58.0px;width:6px;height:1.4px;background:#40b9a6"></div><div class="abs" style="left:2px;top:60.5px;width:6px;height:1.4px;background:#3cb6ac"></div><div class="abs" style="left:2px;top:62.9px;width:6px;height:1.4px;background:#3ab3b0"></div></div>

</body></html>
